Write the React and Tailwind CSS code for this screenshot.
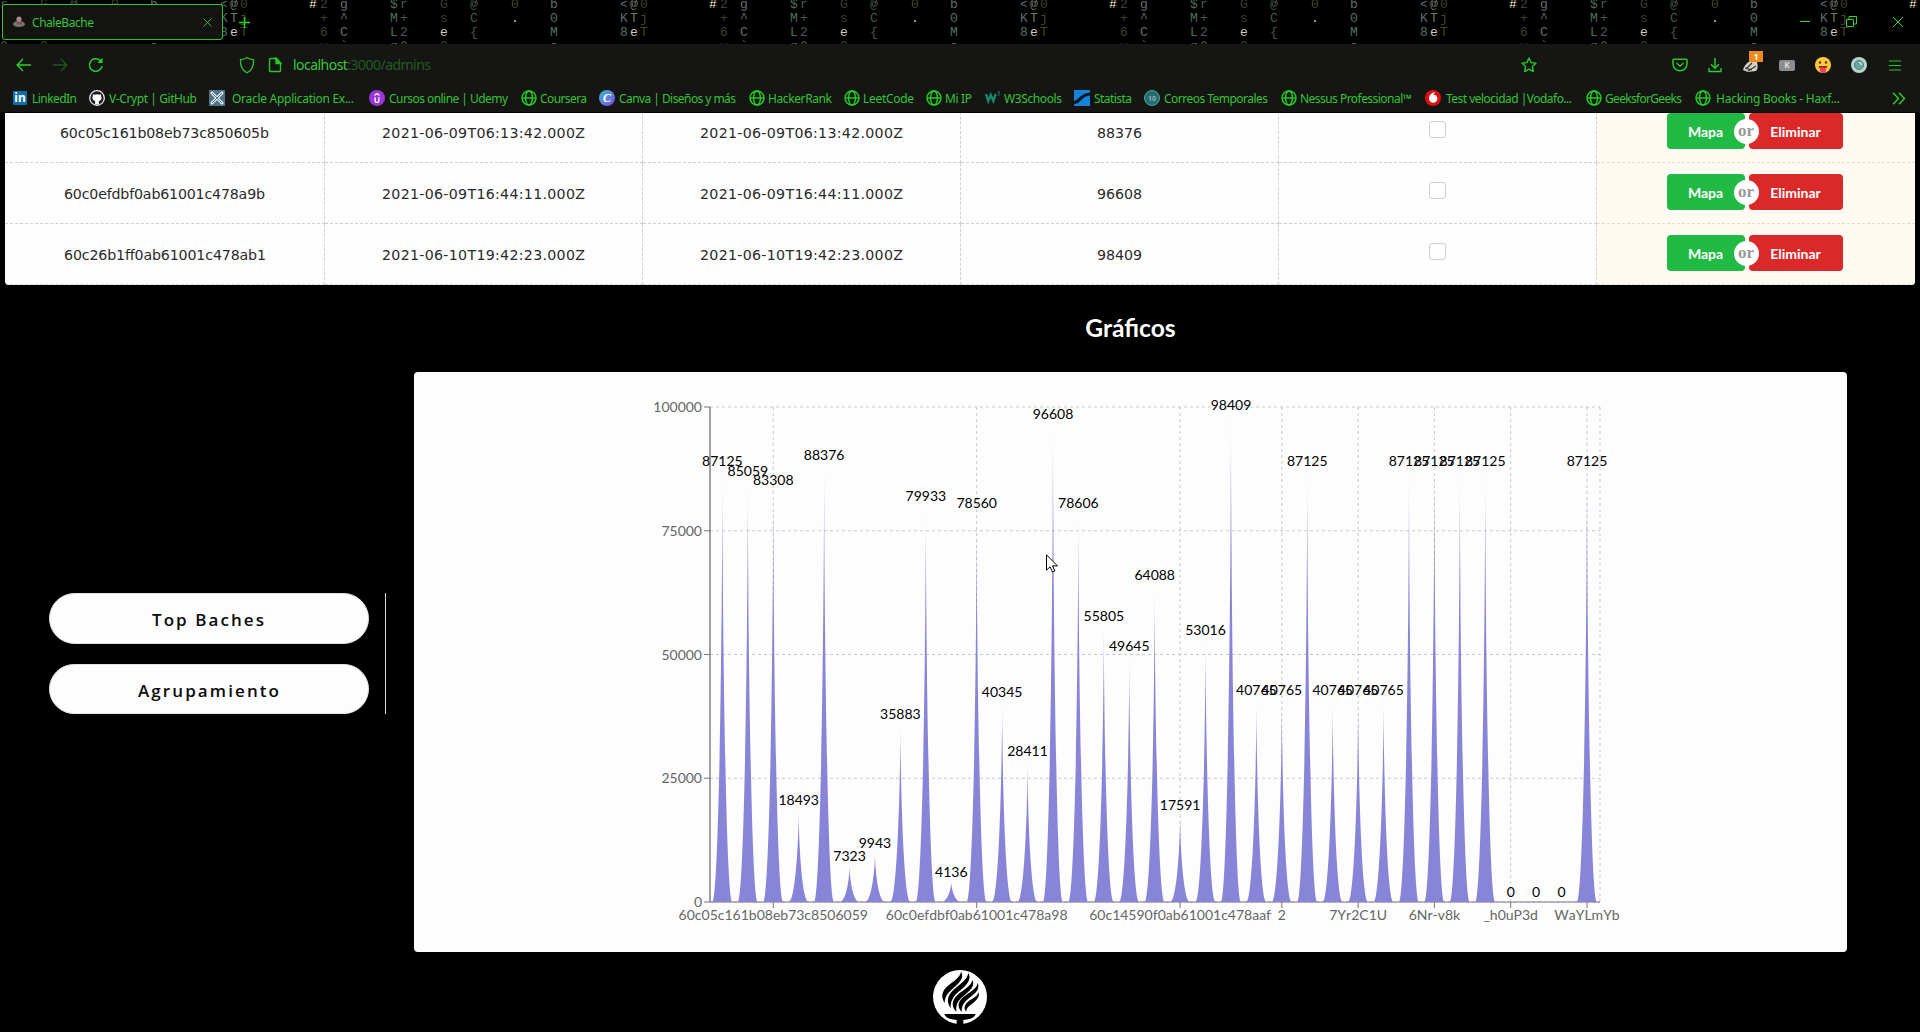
import React from 'react';
import { SiUdemy } from 'react-icons/si';

const GREEN = '#2fd42f';

const matrixColumns = [
  { x: 4, text: ['r', '+', '2', '0'], color: '#4d5a4d' },
  { x: 44, text: ['G', 's', 'e', '0'], color: '#3c4038' },
  { x: 74, text: ['@', 'C', '{', ''], color: '#4a5548' },
  { x: 115, text: ['0', '.', '', ''], color: '#474a33' },
  { x: 154, text: ['b', '0', 'M', 'c'], color: '#587066' },
  { x: 224, text: ['<', 'K', '8', ''], color: '#5a6f6c' },
  { x: 234, text: ['@', 'T', 'e', ''], color: '#6d7a60' },
  { x: 244, text: ['0', 'j', 'T', ''], color: '#45422b' },
  { x: 313, text: ['#', '', '', ''], color: '#f2ecc8' },
  { x: 324, text: ['2', '+', '6', 'v'], color: '#3f4030' },
  { x: 344, text: ['g', '^', 'C', '`'], color: '#6b6b6b' },
  { x: 394, text: ['$', 'M', 'L', 'r'], color: '#4c6f55' },
];

const TAB_RIGHT = 222;
const isVisible = (x, row, ch) => ch && x > 0 && x < 1918 && (x > TAB_RIGHT || row === 0 || row === 3);

function MatrixRain() {
  const tiles = [0, 400, 800, 1200, 1600];
  return (
    <svg className="absolute inset-0" width="1920" height="44" fontFamily='"Liberation Mono", monospace' fontSize="13" textAnchor="middle">
      {tiles.map((t) =>
        matrixColumns.map((c) =>
          c.text.map((ch, i) =>
            isVisible(t + c.x, i, ch) ? (
              <text key={`${t}-${c.x}-${i}`} x={t + c.x} y={8 + i * 14} fill={ch === '.' || ch === 'e' ? '#c9c9b8' : c.color}>
                {ch}
              </text>
            ) : null
          )
        )
      )}
    </svg>
  );
}

function Globe() {
  return (
    <svg width="16" height="16" viewBox="0 0 16 16" fill="none" stroke="#1fd41f" strokeWidth="1.4">
      <circle cx="8" cy="8" r="7" />
      <ellipse cx="8" cy="8" rx="3.4" ry="7" />
      <path d="M1 8h14" />
    </svg>
  );
}

function Github() {
  return (
    <svg width="16" height="16" viewBox="0 0 16 16">
      <circle cx="8" cy="8" r="7.3" fill="#1b1b1b" stroke="#e8e8e8" strokeWidth="1.3" />
      <path d="M4 4.2l1.6.6a7 7 0 0 1 4.8 0l1.6-.6.3 2c.9 2.400-.2 4.300-2.500 4.700l.2 3.600H6l.2-3.600C3.900 10.500 2.800 8.600 3.700 6.200z" fill="#fff" />
    </svg>
  );
}

const icons = {
  linkedin: (
    <span className="flex h-[14px] w-[14px] items-center justify-center rounded-[1px] bg-[#0f6ea8] pb-px text-[12px] leading-none font-bold text-white">in</span>
  ),
  github: <Github />,
  oracle: (
    <svg width="16" height="16" viewBox="0 0 16 16">
      <rect width="16" height="16" fill="#4f7488" />
      <path d="M3 3l10 10M13 3L3 13" stroke="#e6eef2" strokeWidth="3" strokeLinecap="round" />
      <path d="M3 3l10 10M13 3L3 13" stroke="#4f7488" strokeWidth="1" />
    </svg>
  ),
  udemy: (
    <span className="flex h-4 w-4 items-center justify-center rounded-full bg-[#9a35d6]">
      <SiUdemy size={10} color="#fff" />
    </span>
  ),
  globe: <Globe />,
  canva: (
    <span className="flex h-4 w-4 items-center justify-center rounded-full bg-linear-to-br from-[#20b8d0] to-[#7040e0] pb-px font-['Liberation_Serif',serif] text-[12px] leading-none font-bold text-white italic">C</span>
  ),
  w3: (
    <svg width="16" height="16" viewBox="0 0 16 16" fill="none" stroke="#178a63">
      <path d="M1 4l2.300 7 2.500-6 2.500 6 2.500-7" strokeWidth="2.4" />
      <path d="M12.500 2h2.300l-1.300 1.600c1.800 0 1.700 2.200-.8 1.900" strokeWidth="0.9" />
    </svg>
  ),
  statista: (
    <svg width="16" height="16" viewBox="0 0 16 16">
      <rect width="16" height="16" fill="#1484dc" />
      <path d="M0 12.500c6 0 6-8 16-8.500" fill="none" stroke="#0d1722" strokeWidth="3.200" />
    </svg>
  ),
  correos: (
    <span className="flex h-4 w-4 items-center justify-center rounded-full border border-[#2fb59a] bg-[#2c6a72] text-[7px] leading-none font-bold text-[#7fb2b6]">10</span>
  ),
  vodafone: (
    <svg width="16" height="16" viewBox="0 0 16 16">
      <circle cx="8" cy="8" r="8" fill="#e01010" />
      <path d="M10.500 2C7 2.300 4 5.300 4 8.500a4.200 4.200 0 0 0 8.400 0C12.400 6 10.500 5 8.800 4.700 8.800 3.500 9.500 2.600 10.500 2z" fill="#fff" />
    </svg>
  ),
};

const bookmarks = [
  { icon: 'linkedin', label: 'LinkedIn', w: 'w-[76px]', pad: 'w-[19px]', len: 45 },
  { icon: 'github', label: 'V-Crypt | GitHub', w: 'w-[120px]', pad: 'w-[20px]', len: 88 },
  { icon: 'oracle', label: 'Oracle Application Ex...', w: 'w-[160px]', pad: 'w-[23px]', len: 122 },
  { icon: 'udemy', label: 'Cursos online | Udemy', w: 'w-[152px]', pad: 'w-[20px]', len: 119 },
  { icon: 'globe', label: 'Coursera', w: 'w-[78px]', pad: 'w-[19px]', len: 47 },
  { icon: 'canva', label: 'Canva | Diseños y más', w: 'w-[150px]', pad: 'w-[20px]', len: 117 },
  { icon: 'globe', label: 'HackerRank', w: 'w-[95px]', pad: 'w-[19px]', len: 64 },
  { icon: 'globe', label: 'LeetCode', w: 'w-[82px]', pad: 'w-[19px]', len: 51 },
  { icon: 'globe', label: 'Mi IP', w: 'w-[59px]', pad: 'w-[19px]', len: 27 },
  { icon: 'w3', label: 'W3Schools', w: 'w-[89px]', pad: 'w-[19px]', len: 58 },
  { icon: 'statista', label: 'Statista', w: 'w-[70px]', pad: 'w-[20px]', len: 38 },
  { icon: 'correos', label: 'Correos Temporales', w: 'w-[137px]', pad: 'w-[20px]', len: 104 },
  { icon: 'globe', label: 'Nessus Professional™', w: 'w-[144px]', pad: 'w-[19px]', len: 112 },
  { icon: 'vodafone', label: 'Test velocidad |Vodafo...', w: 'w-[161px]', pad: 'w-[21px]', len: 126 },
  { icon: 'globe', label: 'GeeksforGeeks', w: 'w-[109px]', pad: 'w-[19px]', len: 77 },
  { icon: 'globe', label: 'Hacking Books - Haxf...', w: 'w-[160px]', pad: 'w-[21px]', len: 124 },
];

function FitText({ children, len, height, size, baseline, fill, weight, family }) {
  return (
    <svg className="shrink-0 overflow-visible" width={len} height={height}>
      <text x="0" y={baseline} fontSize={size} fill={fill} fontWeight={weight} fontFamily={family} textLength={len}>
        {children}
      </text>
    </svg>
  );
}

const UI = '"Noto Sans", sans-serif';

function TabStrip() {
  return (
    <div className="relative h-11 overflow-hidden bg-black">
      <MatrixRain />
      <div className="relative flex h-full items-start pt-1 pl-[2px]">
        <div className="flex h-9 w-[221px] items-center rounded-[3px] border border-[#2fc42f] bg-[#131312] pl-[9px]">
          <svg width="14" height="14" viewBox="0 0 14 14">
            <path d="M1 9c1-3 3-2 4-3l4 0c1 1 3 0 4 3 0 4-12 4-12 0z" fill="#77706f" />
            <circle cx="7" cy="4" r="2.600" fill="#a98a8c" />
            <path d="M5 7h5v2H5z" fill="#8c4a4e" />
          </svg>
          <span className="ml-[6px]">
            <FitText len={62} height={16} size={12} baseline={13} fill="#37c437" family={UI}>ChaleBache</FitText>
          </span>
          <svg className="ml-[109px]" width="9" height="9" viewBox="0 0 9 9" stroke="#37b437"><path d="M.5.5l8 8M8.500.5l-8 8" /></svg>
        </div>
        <svg className="mt-[13px] ml-4" width="11" height="11" viewBox="0 0 11 11" stroke="#19e019" strokeWidth="1.400"><path d="M5.500 0v11M0 5.500h11" /></svg>
        <svg className="mt-[17px] ml-[1550px]" width="10" height="2"><path d="M0 .5h10" stroke={GREEN} /></svg>
        <svg className="mt-3 ml-[36px]" width="11" height="11" viewBox="0 0 11 11" fill="none" stroke={GREEN}><path d="M.5 3.500h7v7h-7zM3 3V.5h7.500V8H8" /></svg>
        <svg className="mt-[13px] ml-9" width="10" height="10" viewBox="0 0 10 10" stroke={GREEN}><path d="M0 0l10 10M10 0L0 10" /></svg>
      </div>
    </div>
  );
}

function NavBar() {
  return (
    <div className="flex h-10 items-center pt-[2px] pl-4">
      <svg width="16" height="14" viewBox="0 0 16 14" fill="none" stroke="#24d424" strokeWidth="1.400"><path d="M15 7H1.500M7 1L1.200 7 7 13" /></svg>
      <svg className="ml-5" width="16" height="14" viewBox="0 0 16 14" fill="none" stroke="#1d571d" strokeWidth="1.400"><path d="M1 7h13.500M9 1l5.800 6L9 13" /></svg>
      <svg className="ml-5" width="16" height="16" viewBox="0 0 16 16" fill="none" stroke="#24d424" strokeWidth="1.500"><path d="M14 9a6.300 6.300 0 1 1-2-5.600l2 2" /><path d="M14.500 1v5h-5z" fill="#24d424" stroke="none" /></svg>
      <svg className="ml-[135px]" width="16" height="18" viewBox="0 0 16 18" fill="none" stroke="#24c824" strokeWidth="1.300"><path d="M8 1.500c2 1.600 4 2 6.500 2.200C14.700 10 13 14.500 8 16.800 3 14.500 1.300 10 1.500 3.700 4 3.500 6 3.100 8 1.500z" /></svg>
      <svg className="ml-[13px]" width="14" height="16" viewBox="0 0 14 16" fill="none" stroke="#24c824" strokeWidth="1.400"><path d="M8.500 1.500H2.500a1 1 0 0 0-1 1v11a1 1 0 0 0 1 1h9a1 1 0 0 0 1-1V6z" /><path d="M8 1v5.500h5z" fill="#24c824" /></svg>
      <svg className="ml-[11px]" width="140" height="20">
        <text x="0" y="15" fontSize="14" fill="#37c837" fontFamily={UI} textLength="138">
          localhost<tspan fill="#215c21">:3000/admins</tspan>
        </text>
      </svg>
      <svg className="ml-[1088px]" width="16" height="16" viewBox="0 0 16 16" fill="none" stroke="#24c824" strokeWidth="1.400" strokeLinejoin="round"><path d="M8 1l2.100 4.600 4.900.6-3.600 3.400.9 5L8 12.200l-4.300 2.400.9-5L1 6.200l4.900-.6z" /></svg>
      <svg className="ml-[135px]" width="16" height="14" viewBox="0 0 16 14" fill="none" stroke="#24c824" strokeWidth="1.500"><path d="M2 1.200h12a1 1 0 0 1 1 1V5.500c0 9.500-14 9.500-14 0V2.200a1 1 0 0 1 1-1z" /><path d="M4.500 5L8 8l3.500-3" /></svg>
      <svg className="ml-5" width="14" height="16" viewBox="0 0 14 16" fill="none" stroke="#24d424" strokeWidth="1.400"><path d="M7 1v10M3 7.200l4 4 4-4M1 11v3.500h12V11" /></svg>
      <div className="relative ml-[21px] h-4 w-[18px]">
        <svg width="18" height="16" viewBox="0 0 18 16"><path d="M0 13c1-4 4-8 8-9l6 1c1 4 1 7-1 9l-8 1z" fill="#d8d0c4" /><path d="M3 12l6-6M5 14l8-5M2 11l7 2" stroke="#343434" strokeWidth="1.200" /></svg>
        <span className="absolute -top-[6px] left-[6px] flex h-[11px] w-[14px] items-center justify-center bg-[#ef8b1c] font-['Noto_Sans',sans-serif] text-[9px] leading-none font-bold text-white">1</span>
      </div>
      <span className="ml-[18px] flex h-[11px] w-4 items-center justify-center rounded-[2px] bg-[#8c8c8c] font-['Noto_Sans',sans-serif] text-[8px] leading-none font-bold text-[#dedede]">K</span>
      <svg className="ml-5" width="16" height="16" viewBox="0 0 16 16"><circle cx="8" cy="8" r="8" fill="#ffc93a" /><path d="M3.500 9h9c0 4-9 4-9 0z" fill="#7a3018" /><path d="M5 10.500h6V13a3 3 0 0 1-6 0z" fill="#ee3f5e" /><circle cx="5" cy="5.500" r="1.300" fill="#5c3a10" /><circle cx="11" cy="5.500" r="1.300" fill="#5c3a10" /></svg>
      <svg className="ml-5" width="16" height="16" viewBox="0 0 16 16"><circle cx="8" cy="8" r="8" fill="#bcd2cd" /><circle cx="8" cy="8" r="4.600" fill="#6aa69d" stroke="#4c8880" strokeWidth="1" /><path d="M8 5.500A2.500 2.500 0 0 1 10.500 8" stroke="#fff" fill="none" /></svg>
      <svg className="ml-[22px]" width="12" height="11" viewBox="0 0 12 11" stroke="#24c824" strokeWidth="1.200"><path d="M0 1h12M0 5.500h12M0 10h12" /></svg>
    </div>
  );
}

function Bookmarks() {
  return (
    <div className="flex h-7 items-center pl-[13px] font-['Noto_Sans',sans-serif]">
      {bookmarks.map((b) => (
        <div key={b.label} className={`flex shrink-0 items-center ${b.w}`}>
          <span className={`shrink-0 ${b.pad}`}>{icons[b.icon]}</span>
          <FitText len={b.len} height={18} size={12} baseline={14} fill="#33c433" family={UI}>{b.label}</FitText>
        </div>
      ))}
      <svg className="ml-[37px]" width="14" height="13" viewBox="0 0 14 13" fill="none" stroke="#24d424" strokeWidth="1.400"><path d="M1 .8l5.500 5.700L1 12.200M7 .8l5.500 5.700L7 12.200" /></svg>
    </div>
  );
}

const rows = [
  { id: '60c05c161b08eb73c850605b', len: 209, date: '2021-06-09T06:13:42.000Z', value: '88376' },
  { id: '60c0efdbf0ab61001c478a9b', len: 201, date: '2021-06-09T16:44:11.000Z', value: '96608' },
  { id: '60c26b1ff0ab61001c478ab1', len: 202, date: '2021-06-10T19:42:23.000Z', value: '98409' },
];

const cell = 'flex items-center justify-center border-r border-b border-dashed border-[#cfcfd8]';
const TABLE_FONT = '"DejaVu Sans", sans-serif';

function CellText({ children, len }) {
  return <FitText len={len} height={20} size={14.2} baseline={16} fill="#2a2a2a" family={TABLE_FONT}>{children}</FitText>;
}

function ResultsTable() {
  return (
    <div className="ml-[5px] flex h-[172px] w-[1910px] flex-col justify-end overflow-hidden rounded-b-[4px] bg-[#fdfdfe]">
      {rows.map((r) => (
        <div key={r.id} className="grid h-[61px] shrink-0 grid-cols-[320px_318px_318px_318px_318px_318px]">
          <div className={cell}><CellText len={r.len}>{r.id}</CellText></div>
          <div className={cell}><CellText len={203}>{r.date}</CellText></div>
          <div className={cell}><CellText len={203}>{r.date}</CellText></div>
          <div className={cell}><CellText len={45}>{r.value}</CellText></div>
          <div className={cell}><span className="mb-[5px] h-[17px] w-[17px] rounded-[3px] border border-[#d0d0d4] bg-white" /></div>
          <div className="flex items-center justify-center border-b border-dashed border-[#e4dcd4] bg-[#fffaf2] pr-[3px] pb-[2px] font-['Lato',sans-serif] text-[14px] font-bold text-white">
            <div className="relative flex gap-1">
              <span className="flex h-9 w-[78px] items-center justify-center rounded-[4px] bg-[#21ba45] pt-px">Mapa</span>
              <span className="flex h-9 w-[94px] items-center justify-center rounded-[4px] bg-[#db2828] pt-px">Eliminar</span>
              <span className="absolute top-[6px] left-[67px] flex h-[25px] w-[25px] items-center justify-center rounded-full bg-white pb-[2px] font-['Liberation_Serif',serif] text-[17px] leading-none text-[#999]">or</span>
            </div>
          </div>
        </div>
      ))}
    </div>
  );
}

const values = [
  87125, 85059, 83308, 18493, 88376, 7323, 9943, 35883, 79933, 4136, 78560, 40345, 28411, 96608, 78606, 55805, 49645, 64088,
  17591, 53016, 98409, 40765, 40765, 87125, 40765, 40765, 40765, 87125, 87125, 87125, 87125, 0, 0, 0, 87125,
];

const ticks = [
  [2, '60c05c161b08eb73c8506059'],
  [10, '60c0efdbf0ab61001c478a98'],
  [18, '60c14590f0ab61001c478aaf'],
  [22, '2'],
  [25, '7Yr2C1U'],
  [28, '6Nr-v8k'],
  [31, '_h0uP3d'],
  [34, 'WaYLmYb'],
];

const PLOT = { left: 296, right: 1186, top: 35, bottom: 530 };
const band = (PLOT.right - PLOT.left) / values.length;
const centerOf = (i) => PLOT.left + band * (i + 0.5) - 0.3;
const yOf = (v) => PLOT.bottom - (v / 100000) * (PLOT.bottom - PLOT.top);

function spike(i, v) {
  const w = 20;
  const x = centerOf(i) - w / 2;
  const y = yOf(v);
  const h = PLOT.bottom - y;
  return `M${x},${y + h}C${x + w / 3},${y + h} ${x + w / 2},${y + h / 3} ${x + w / 2},${y}C${x + w / 2},${y + h / 3} ${x + (2 * w) / 3},${y + h} ${x + w},${y + h}Z`;
}

function Chart() {
  return (
    <svg width="1433" height="580" fontFamily="Lato, sans-serif" fontSize="14">
      <g stroke="#c8c8d0" strokeDasharray="3 3">
        {[0, 25000, 50000, 75000, 100000].map((v) => (
          <line key={v} x1={PLOT.left} x2={PLOT.right} y1={yOf(v)} y2={yOf(v)} />
        ))}
        {ticks.map(([i]) => (
          <line key={i} x1={centerOf(i)} x2={centerOf(i)} y1={PLOT.top} y2={PLOT.bottom} />
        ))}
        <line x1={PLOT.right} x2={PLOT.right} y1={PLOT.top} y2={PLOT.bottom} />
      </g>
      <g stroke="#777">
        <line x1={PLOT.left} x2={PLOT.left} y1={PLOT.top} y2={PLOT.bottom} strokeWidth="1.4" />
        <line x1={PLOT.left} x2={PLOT.right} y1={PLOT.bottom} y2={PLOT.bottom} />
        {[0, 25000, 50000, 75000, 100000].map((v) => (
          <line key={v} x1={PLOT.left - 6} x2={PLOT.left} y1={yOf(v)} y2={yOf(v)} />
        ))}
        {ticks.map(([i]) => (
          <line key={i} x1={centerOf(i)} x2={centerOf(i)} y1={PLOT.bottom} y2={PLOT.bottom + 6} />
        ))}
      </g>
      <g fill="#666" textAnchor="end">
        {[0, 25000, 50000, 75000, 100000].map((v) => (
          <text key={v} x={PLOT.left - 8} y={yOf(v) + 5}>{v}</text>
        ))}
      </g>
      <g fill="#666" textAnchor="middle" className="[font-kerning:none]">
        {ticks.map(([i, t]) => (
          <text key={i} x={centerOf(i)} y={548}>{t}</text>
        ))}
      </g>
      <g fill="#8884d8">
        {values.map((v, i) => (v ? <path key={i} d={spike(i, v)} /> : null))}
      </g>
      <g fill="#000" textAnchor="middle">
        {values.map((v, i) => (
          <text key={i} x={centerOf(i)} y={yOf(v) - 5}>{v}</text>
        ))}
      </g>
    </svg>
  );
}

function SideButton({ label, len, className }) {
  return (
    <button className={`flex w-[320px] items-center justify-center rounded-full border border-[#e2e2ea] bg-[#fdfdfe] pt-px pr-[2px] ${className}`}>
      <FitText len={len} height={24} size={17} baseline={19} fill="#0a0a0a" weight="600" family={'"Open Sans", sans-serif'}>{label}</FitText>
    </button>
  );
}

function TorchLogo() {
  return (
    <svg width="54" height="54" viewBox="99 90 162 162">
      <circle cx="180" cy="171" r="81" fill="#fdfdfe" />
      <g fill="#000">
        <path d="M183 95c9 15 0 28-15 42-18 16-34 27-34 52-12-18-9-35 9-51 18-15 37-25 40-43z" />
        <path d="M205 99c9 16 0 30-16 45-18 16-38 28-37 60-13-18-11-36 8-54 18-17 42-30 45-51z" />
        <path d="M217 120c8 15-3 28-17 40-18 16-34 25-31 55-15-16-15-33 4-51 17-15 41-25 44-44z" />
        <path d="M233 128c7 16-3 28-17 39-17 14-32 23-31 49-12-14-14-27 4-44 16-14 42-24 44-44z" />
        <path d="M235 156c6 14-5 24-15 32-13 10-21 15-21 27-8-10-7-19 5-30 11-10 29-14 31-29z" />
        <path d="M133 222h94c-4 12-18 17-37 18v13h-20v-13c-19-1-33-6-37-18z" />
      </g>
    </svg>
  );
}

export default function App() {
  return (
    <div className="relative h-[1032px] w-[1920px] overflow-hidden bg-black">
      <header className="h-[113px]">
        <TabStrip />
        <div className="h-[68px] bg-[#151514]">
          <NavBar />
          <Bookmarks />
        </div>
      </header>
      <ResultsTable />
      <div className="flex h-[666px]">
        <aside className="flex w-[414px] pt-[308px] pl-[49px]">
          <div className="flex h-[121px] w-[337px] flex-col justify-between border-r border-[#d8d8e0]">
            <SideButton label="Top Baches" len={112} className="h-[51px]" />
            <SideButton label="Agrupamiento" len={141} className="h-[50px]" />
          </div>
        </aside>
        <main className="w-[1433px]">
          <h1 className="flex h-[87px] items-center justify-center font-['Lato',sans-serif] text-[24.6px] font-bold text-white">Gráficos</h1>
          <div className="h-[580px] rounded-[4px] bg-[#fdfdfe]">
            <Chart />
          </div>
        </main>
      </div>
      <footer className="flex justify-center pt-[19px]">
        <TorchLogo />
      </footer>
      <svg className="absolute top-[554px] left-[1046px]" width="12" height="19" viewBox="0 0 12 19">
        <path d="M.5.8v15.400l3.600-3.400 2.300 5.200 2.400-1-2.300-5.100h5z" fill="#fff" stroke="#000" />
      </svg>
    </div>
  );
}
